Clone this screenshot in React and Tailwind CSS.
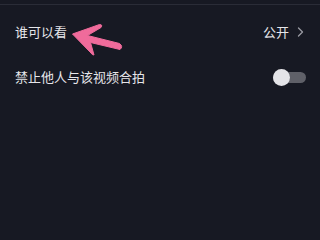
import React from "react";

export default function App() {
  return (
    <div
      className="relative w-[320px] h-[240px] bg-[#171923] overflow-hidden"
      style={{ fontFamily: '"Noto Sans CJK SC", "Noto Sans", sans-serif' }}
    >
      <div className="pt-[4px]">
        <div className="h-px bg-[#2a2c37]" />
        <div className="flex items-center justify-between pl-[15px] pr-[16px] h-[54px]">
          <span className="text-[13px] leading-[18px] text-[#e6e6ea]">谁可以看</span>
          <div className="flex items-center gap-[8px]">
            <span className="text-[13px] leading-[18px] text-[#e6e6ea]">公开</span>
            <svg width="7" height="10" viewBox="0 0 7 10" fill="none">
              <path d="M1.5 1 L5.5 5 L1.5 9" stroke="#9a9ba3" strokeWidth="1.3" strokeLinecap="round" strokeLinejoin="round" />
            </svg>
          </div>
        </div>
        <div className="flex items-center justify-between pl-[15px] pr-[14px] h-[36px]">
          <span className="text-[13px] leading-[18px] text-[#e6e6ea]">禁止他人与该视频合拍</span>
          <div className="relative w-[33px] h-[17px] flex items-center">
            <div className="absolute left-0 right-0 h-[11px] rounded-full bg-[#5f6068]" />
            <div className="absolute left-0 w-[17px] h-[17px] rounded-full bg-[#e4e4e8]" />
          </div>
        </div>
      </div>
      <svg
        className="absolute left-0 top-0"
        width="320"
        height="240"
        viewBox="0 0 320 240"
      >
        <path
          d="M72.5 34 L99.5 24.5 Q103 24.5 101 27.5 L87.5 35.5 L119.5 43.5 Q123.5 46.5 120 49.5 L90.5 42.5 L94 55 Q92 55 91 53 Z"
          fill="#f06b9b"
          stroke="#f06b9b"
          strokeWidth="1"
          strokeLinejoin="round"
        />
      </svg>
    </div>
  );
}
